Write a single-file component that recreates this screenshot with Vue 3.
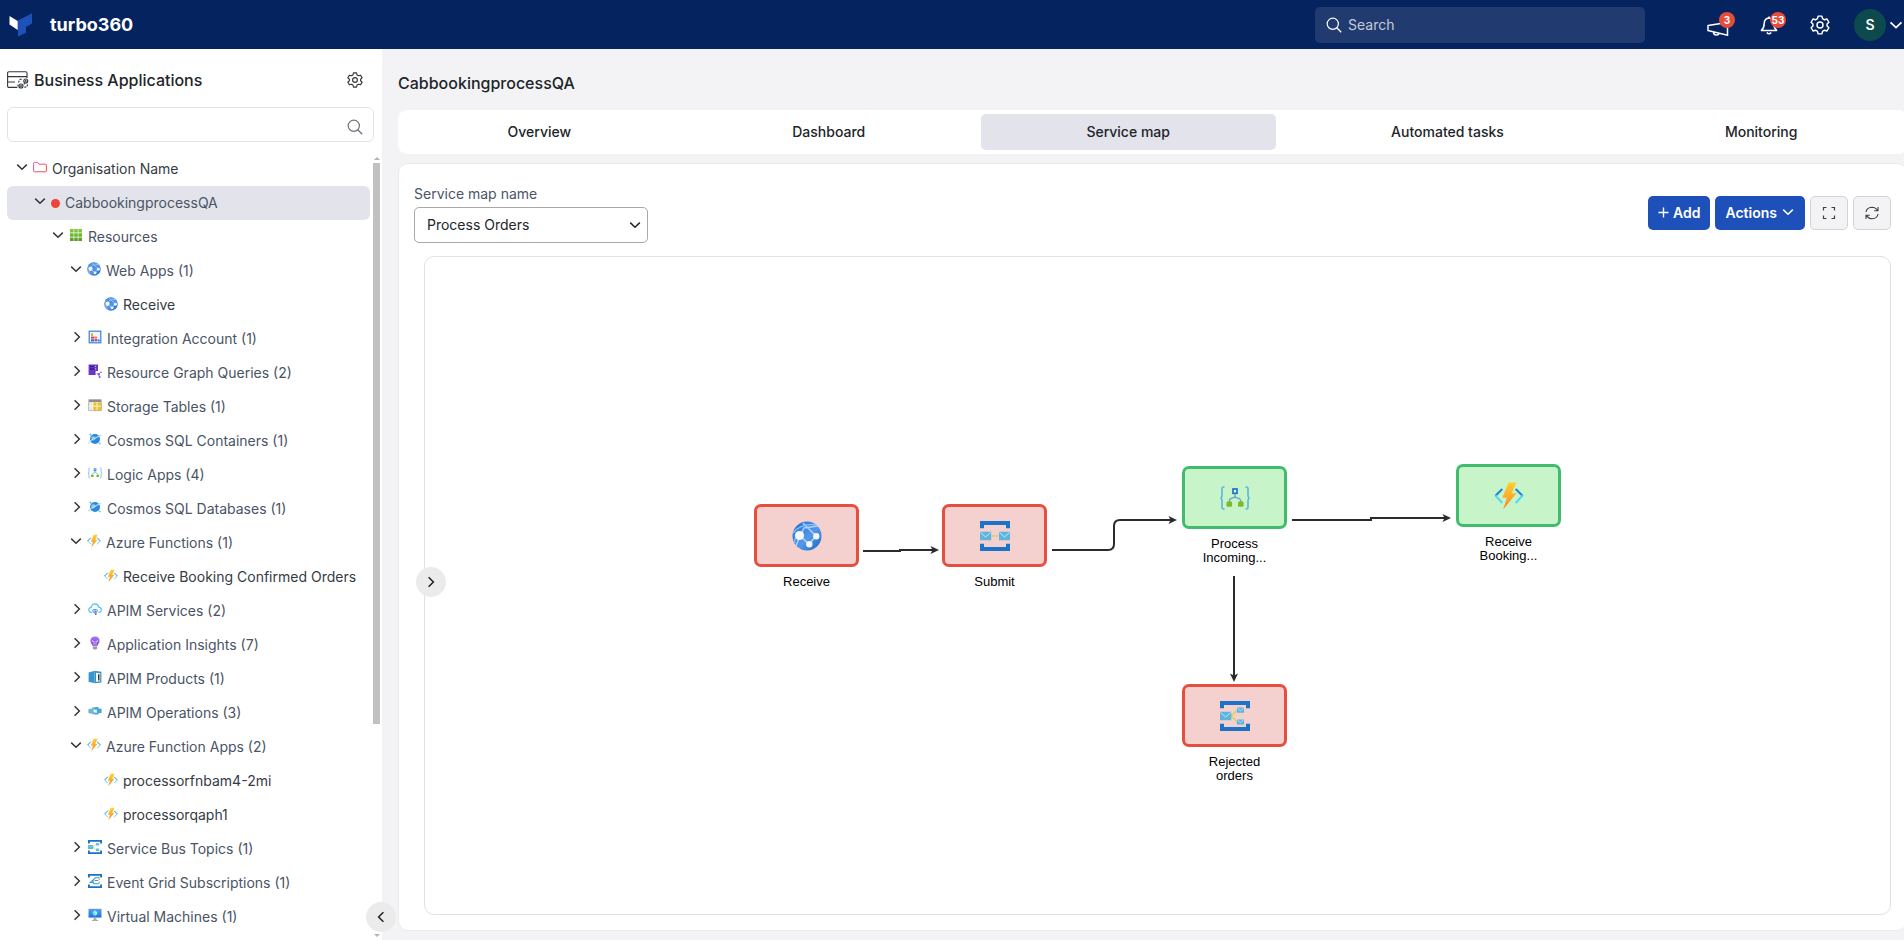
<script setup>
import { ref } from 'vue'

const tree = [
  { label: 'Organisation Name', icon: 'folder', level: 0, open: true, strong: true },
  { label: 'CabbookingprocessQA', dot: true, level: 1, open: true, selected: true },
  { label: 'Resources', icon: 'grid', level: 2, open: true },
  { label: 'Web Apps (1)', icon: 'globe', level: 3, open: true },
  { label: 'Receive', icon: 'globe', level: 4, leaf: true },
  { label: 'Integration Account (1)', icon: 'integration', level: 3 },
  { label: 'Resource Graph Queries (2)', icon: 'graph', level: 3 },
  { label: 'Storage Tables (1)', icon: 'table', level: 3 },
  { label: 'Cosmos SQL Containers (1)', icon: 'cosmos', level: 3 },
  { label: 'Logic Apps (4)', icon: 'logic', level: 3 },
  { label: 'Cosmos SQL Databases (1)', icon: 'cosmos', level: 3 },
  { label: 'Azure Functions (1)', icon: 'function', level: 3, open: true },
  { label: 'Receive Booking Confirmed Orders', icon: 'function', level: 4, leaf: true },
  { label: 'APIM Services (2)', icon: 'apim', level: 3 },
  { label: 'Application Insights (7)', icon: 'insights', level: 3 },
  { label: 'APIM Products (1)', icon: 'product', level: 3 },
  { label: 'APIM Operations (3)', icon: 'operation', level: 3 },
  { label: 'Azure Function Apps (2)', icon: 'function', level: 3, open: true },
  { label: 'processorfnbam4-2mi', icon: 'function', level: 4, leaf: true },
  { label: 'processorqaph1', icon: 'function', level: 4, leaf: true },
  { label: 'Service Bus Topics (1)', icon: 'topic', level: 3 },
  { label: 'Event Grid Subscriptions (1)', icon: 'event', level: 3 },
  { label: 'Virtual Machines (1)', icon: 'vm', level: 3 }
]

const tabs = ['Overview', 'Dashboard', 'Service map', 'Automated tasks', 'Monitoring']
const activeTab = ref('Service map')
const mapName = ref('Process Orders')
const filter = ref('')
const search = ref('')

const nodes = [
  { id: 1, lines: ['Receive'], icon: 'globe', status: 'error', x: 329, y: 247 },
  { id: 2, lines: ['Submit'], icon: 'queue', status: 'error', x: 517, y: 247 },
  { id: 3, lines: ['Process', 'Incoming...'], icon: 'logic', status: 'ok', x: 757, y: 209 },
  { id: 4, lines: ['Receive', 'Booking...'], icon: 'function', status: 'ok', x: 1031, y: 207 },
  { id: 5, lines: ['Rejected', 'orders'], icon: 'topic', status: 'error', x: 757, y: 427 }
]

const edges = [
  'M438 294H475V293H510',
  'M627 293H683Q689 293 689 287V269Q689 263 695 263H748',
  'M867 263H946V261H1022',
  'M809 319V421'
]
</script>

<template>
  <svg class="sprite" aria-hidden="true">
    <defs>
      <linearGradient id="g-globe" x1="0" y1="0" x2="1" y2="1">
        <stop offset="0" stop-color="#1b6fd0" /><stop offset="0.55" stop-color="#5596ea" /><stop offset="1" stop-color="#1267c4" />
      </linearGradient>
      <linearGradient id="g-bolt" x1="0" y1="0" x2="0" y2="1">
        <stop offset="0" stop-color="#fdd22c" /><stop offset="1" stop-color="#f8892d" />
      </linearGradient>
      <linearGradient id="g-grid" x1="0" y1="0" x2="0" y2="1">
        <stop offset="0" stop-color="#86cc3e" /><stop offset="1" stop-color="#5b9a24" />
      </linearGradient>
      <linearGradient id="g-vm" x1="0" y1="0" x2="0" y2="1">
        <stop offset="0" stop-color="#5ea0ef" /><stop offset="1" stop-color="#1475d8" />
      </linearGradient>
      <linearGradient id="g-bulb" x1="0" y1="0" x2="0" y2="1">
        <stop offset="0" stop-color="#a67af4" /><stop offset="1" stop-color="#773adc" />
      </linearGradient>
      <linearGradient id="g-folder" x1="0" y1="0" x2="1" y2="1">
        <stop offset="0" stop-color="#e85a9a" /><stop offset="1" stop-color="#ec5040" />
      </linearGradient>
    </defs>

    <symbol id="i-globe" viewBox="0 0 30 30">
      <circle cx="15" cy="15" r="14.5" fill="url(#g-globe)" />
      <path d="M8 15L12 7L26 5M11 2L24 15M8 15L17 23L24 15M8 15L4 25" fill="none" stroke="#a9d2f7" stroke-width="1.6" />
      <path d="M1 12Q9 2 24 4M3 22Q1 17 8 15" fill="none" stroke="#8dc2f2" stroke-width="1.3" />
      <circle cx="7.5" cy="14.5" r="4.6" fill="#f4f6fa" />
      <circle cx="24.3" cy="15.3" r="3.2" fill="#f4f6fa" />
      <circle cx="17.3" cy="23.3" r="3.2" fill="#f4f6fa" />
    </symbol>

    <symbol id="i-queue" viewBox="0 0 30 30">
      <path d="M0 0H30V7.3H26V4H4V7.3H0ZM0 30H30V22.7H26V26H4V22.7H0Z" fill="#1b72c6" />
      <path d="M0 10.8H11.2V19.2H0ZM19 10.8H30V19.2H19Z" fill="#5fb4dd" />
      <path d="M0.5 11.5L5.6 16L10.7 11.5M19.5 11.5L24.5 16L29.5 11.5" fill="none" stroke="#c7e6f4" stroke-width="1" />
      <path d="M12.3 15H14.6M15.6 15H17.9" stroke="#c4d63c" stroke-width="1.5" />
    </symbol>

    <symbol id="i-topic" viewBox="0 0 30 30">
      <path d="M0 0H30V7.3H26V4H4V7.3H0ZM0 30H30V22.7H26V26H4V22.7H0Z" fill="#1b72c6" />
      <path d="M11 15L17.5 9M11 15L17.5 21" stroke="#c4d63c" stroke-width="1.6" stroke-dasharray="2 0.6" />
      <path d="M0 10.8H11.2V19.2H0ZM17 6.6H24V11.7H17ZM17 18.4H24V23.5H17Z" fill="#5fb4dd" />
      <path d="M0.5 11.5L5.6 16L10.7 11.5M17.4 7L20.5 9.8L23.6 7M17.4 18.8L20.5 21.6L23.6 18.8" fill="none" stroke="#c7e6f4" stroke-width="0.9" />
    </symbol>

    <symbol id="i-event" viewBox="0 0 30 30">
      <path d="M0 0H30V7.3H26V4H4V7.3H0ZM0 30H30V22.7H26V26H4V22.7H0Z" fill="#1b72c6" />
      <path d="M25 8H16L5 18H12M22 14H14M24 21H14Q9 19 12 14" fill="none" stroke="#3d9bd8" stroke-width="2.4" />
      <circle cx="24" cy="11" r="2" fill="#b8d432" /><circle cx="24" cy="18" r="2" fill="#b8d432" />
    </symbol>

    <symbol id="i-logic" viewBox="0 0 30 30">
      <path d="M4.5 4H3.6Q2 4 2 6V12Q2 15 0.3 15Q2 15 2 18V24Q2 26 3.6 26H4.5M25.5 4H26.4Q28 4 28 6V12Q28 15 29.7 15Q28 15 28 18V24Q28 26 26.4 26H25.5" fill="none" stroke="#62b2de" stroke-width="1.6" />
      <path d="M15 10V13Q15 14.5 13 14.8Q9.3 15.5 9.3 18V20M15 13Q15 14.5 17 14.8Q20.8 15.5 20.8 18V20" fill="none" stroke="#5fa6cf" stroke-width="1.3" />
      <rect x="13" y="6" width="4" height="4.3" fill="#fff" stroke="#1b72c6" stroke-width="1.7" />
      <rect x="6.5" y="18.5" width="5.6" height="5.3" rx="1" fill="#7fba24" />
      <rect x="18" y="18.5" width="5.6" height="5.3" rx="1" fill="#7fba24" />
    </symbol>

    <symbol id="i-function" viewBox="0 0 30 30">
      <path d="M8.3 8L1.3 15M21.7 8L28.7 15" fill="none" stroke="#1f86db" stroke-width="2.1" />
      <path d="M1.3 14.4L8.3 22M28.7 14.4L21.7 22" fill="none" stroke="#50d9f8" stroke-width="2.1" />
      <path d="M14.5 1.5H22.5L17.7 12.2H22.6L9.2 28.5L12.8 16.8H8.3Z" fill="url(#g-bolt)" />
    </symbol>

    <symbol id="i-grid" viewBox="0 0 14 14">
      <path d="M1 1H4.6V4.6H1ZM5.2 1H8.8V4.6H5.2ZM9.4 1H13V4.6H9.4ZM1 5.2H4.6V8.8H1ZM5.2 5.2H8.8V8.8H5.2ZM9.4 5.2H13V8.8H9.4ZM1 9.4H4.6V13H1ZM5.2 9.4H8.8V13H5.2ZM9.4 9.4H13V13H9.4Z" fill="url(#g-grid)" />
    </symbol>

    <symbol id="i-folder" viewBox="0 0 14 14">
      <path d="M0.6 11V3.2Q0.6 2.4 1.4 2.4H4.6L6 4.2H12.6Q13.4 4.2 13.4 5V11Q13.4 11.8 12.6 11.8H1.4Q0.6 11.8 0.6 11Z" fill="none" stroke="url(#g-folder)" stroke-width="1" />
    </symbol>

    <symbol id="i-integration" viewBox="0 0 14 14">
      <rect x="1.2" y="1.2" width="11.6" height="11.6" fill="#eef5fc" stroke="#3384d8" stroke-width="1.2" />
      <path d="M3 3.2H5V6H3Z" fill="#f0a51e" /><path d="M3 6.6H6.5V8.6H3Z" fill="#e63d3d" />
      <path d="M3 9.2H6V11.4H3ZM9.8 9.4H11.6V11.4H9.8Z" fill="#2f6fd0" /><path d="M6.6 9H9.2V11.4H6.6Z" fill="#c33fa0" /><path d="M7 6.8H9V8.4H7Z" fill="#f06a4a" />
    </symbol>

    <symbol id="i-graph" viewBox="0 0 14 14">
      <path d="M0.6 0.6H10V7H7.6V11H0.6Z" fill="#6b35c9" />
      <path d="M2 2.4H8M2 5H8" stroke="#3d1c8a" stroke-width="1.4" /><circle cx="7.4" cy="2.4" r="0.7" fill="#d9c6fb" /><circle cx="7.4" cy="5" r="0.7" fill="#d9c6fb" />
      <path d="M10.8 10.2L8.4 9.6M10.8 10.2L13 8M10.8 10.2L11.6 13" stroke="#a67af4" stroke-width="0.8" />
      <circle cx="10.8" cy="10.2" r="1.2" fill="#8a55e6" /><circle cx="13" cy="8.2" r="0.8" fill="#8a55e6" /><circle cx="11.6" cy="13" r="1" fill="#8a55e6" />
    </symbol>

    <symbol id="i-table" viewBox="0 0 14 14">
      <path d="M0.6 1.4H13.4V12.6H0.6Z" fill="#f2e7b2" /><path d="M0.6 1.4H13.4V4H0.6Z" fill="#8d8d8d" />
      <path d="M5 4.4H13.4V12.4H5Z" fill="#edc22e" /><path d="M0.6 4.4H4.6V12.4H0.6Z" fill="#e8e8e8" />
      <path d="M0.6 8.2H13.4M4.8 4V12.6M9 4V12.6" stroke="#fff" stroke-width="0.8" /><path d="M0.6 4V12.6H13.4V4" fill="none" stroke="#9c9c8c" stroke-width="0.6" />
    </symbol>

    <symbol id="i-cosmos" viewBox="0 0 14 14">
      <circle cx="7" cy="7" r="5" fill="#3385dc" /><path d="M3.2 5Q7 3 8 6.5Q6 9 4 8.5Z" fill="#8cc9f5" />
      <path d="M1 11.6Q0.2 9.2 7 6.2Q12.8 3.2 13.2 3" fill="none" stroke="#9fe6fb" stroke-width="1.2" />
      <path d="M2.4 0.8L3 2.2L4.4 2.6L3 3.1L2.4 4.4L1.9 3.1L0.5 2.6L1.9 2.2ZM11.8 10L12.2 11.1L13.3 11.5L12.2 11.9L11.8 13L11.4 11.9L10.3 11.5L11.4 11.1Z" fill="#50d0f4" />
    </symbol>

    <symbol id="i-apim" viewBox="0 0 14 14">
      <path d="M4.2 10.4H3.4Q0.8 10.2 0.8 7.8Q0.9 5.6 3.2 5.3Q4 2 7.2 1.9Q10.2 2.1 10.8 5.2Q13.3 5.6 13.3 7.9Q13.2 10.3 10.4 10.4" fill="none" stroke="#4cc8ea" stroke-width="1.2" />
      <path d="M4.5 8.2Q7 6.4 9.5 8.2L8.4 10.6Q7 11.6 5.6 10.6Z" fill="none" stroke="#3aa3df" stroke-width="1" />
      <circle cx="7.2" cy="9.4" r="1.1" fill="#9a6cf0" /><circle cx="7.8" cy="12" r="0.9" fill="#7448cc" />
    </symbol>

    <symbol id="i-insights" viewBox="0 0 14 14">
      <path d="M7 0.4Q11.6 0.6 11.6 5Q11.4 7.2 9.4 9.4V10.2H4.6V9.4Q2.6 7.2 2.4 5Q2.4 0.6 7 0.4Z" fill="url(#g-bulb)" />
      <path d="M5 4.2Q4 4.4 4.2 5.2Q5 6 6 5.2V9.8M9 4.2Q10 4.4 9.8 5.2Q9 6 8 5.2V9.8" fill="none" stroke="#e4d7fd" stroke-width="0.8" />
      <path d="M4.8 10.8H9.2V12.4L8 13.6H6L4.8 12.4Z" fill="#9a9aa4" />
    </symbol>

    <symbol id="i-product" viewBox="0 0 14 14">
      <path d="M0.6 2.4L6.6 0.8V13.2L0.6 11.8Z" fill="#3797cc" /><path d="M6.6 0.8L13.4 1.8V12.4L6.6 13.2Z" fill="#3e8fc0" />
      <path d="M8 2.8L12.2 3.2V11.2L8 11.8Z" fill="#f7fafc" /><path d="M10.8 4.2V10.6M10 6.2H11.4" stroke="#1d2b36" stroke-width="1.3" />
    </symbol>

    <symbol id="i-operation" viewBox="0 0 14 14">
      <path d="M0.4 5.6Q0.4 4.8 1.4 4.8H4V3.4H7.4V5.4H5.6V8.2H7.4V10.2H4V9.4H1.4Q0.4 9.4 0.4 8.6Z" fill="#69b8da" />
      <path d="M13.6 8.4Q13.6 9.2 12.6 9.2H10.4V10.6H6.8V8.8H8.8V5.8H6.6V3H10.4V4.6H12.6Q13.6 4.6 13.6 5.4Z" fill="#4ba6cd" />
    </symbol>

    <symbol id="i-vm" viewBox="0 0 14 14">
      <path d="M0.5 0.8H13.5V9.6H0.5Z" fill="url(#g-vm)" /><path d="M7 2.6L9.2 3.9V6.4L7 7.7L4.8 6.4V3.9Z" fill="#a6ecfb" /><path d="M7 5.1V7.7L4.8 6.4V3.9Z" fill="#63d0f2" />
      <path d="M5.8 9.6H8.2L8.6 12H10V13H4V12H5.4Z" fill="#a9a9ae" />
    </symbol>

    <symbol id="i-gear" viewBox="0 0 18 18">
      <path d="M7.3 1H10.7L11.3 3.3L13 4.3L15.3 3.6L17 6.6L15.3 8.2V9.8L17 11.4L15.3 14.4L13 13.7L11.3 14.7L10.7 17H7.3L6.7 14.7L5 13.7L2.7 14.4L1 11.4L2.7 9.8V8.2L1 6.6L2.7 3.6L5 4.3L6.7 3.3Z" fill="none" stroke="currentColor" stroke-width="1.3" stroke-linejoin="round" />
      <circle cx="9" cy="9" r="2.7" fill="none" stroke="currentColor" stroke-width="1.3" />
    </symbol>

    <symbol id="i-search" viewBox="0 0 16 16">
      <circle cx="6.8" cy="6.8" r="5.6" fill="none" stroke="currentColor" stroke-width="1.2" />
      <path d="M10.8 10.8L15.2 15.2" stroke="currentColor" stroke-width="1.3" />
    </symbol>

    <symbol id="i-down" viewBox="0 0 14 14">
      <path d="M2.2 4.6L7 9.2L11.8 4.6" fill="none" stroke="currentColor" stroke-width="1.5" />
    </symbol>
    <symbol id="i-right" viewBox="0 0 14 14">
      <path d="M4.6 2.2L9.4 7L4.6 11.8" fill="none" stroke="currentColor" stroke-width="1.5" />
    </symbol>
  </svg>

  <div class="page">
    <header class="topbar">
      <a class="brand" href="#">
        <svg class="logo" viewBox="0 0 24 24" aria-hidden="true">
          <path d="M0.5 3L8.7 8V17L0.5 11.5Z" fill="#fff" />
          <path d="M9 7.6L23 0.2V10.4L17 14V19.8L9 23.6Z" fill="#1f52b8" />
        </svg>
        <span>turbo360</span>
      </a>
      <label class="global-search">
        <svg class="i16" aria-hidden="true"><use href="#i-search" /></svg>
        <input v-model="search" type="search" placeholder="Search" aria-label="Search" />
      </label>
      <nav class="top-actions" aria-label="Account">
        <button class="top-btn horn" type="button" aria-label="Announcements">
          <svg viewBox="0 0 22 14" aria-hidden="true"><path d="M1 3V9.2M1 3.6L20.5 0.4V13.2L1 8.6M6.5 10.2Q6.6 13 9.4 13Q11.6 13 12.2 11.4" fill="none" stroke="#fff" stroke-width="1.5" /></svg>
          <span class="badge">3</span>
        </button>
        <button class="top-btn bell" type="button" aria-label="Notifications">
          <svg viewBox="0 0 18 20" aria-hidden="true"><path d="M9 1.4V3Q4.4 3.4 4.2 8.4Q4.2 12.6 1.4 15.4H16.6Q13.8 12.6 13.8 8.4Q13.6 3.4 9 3M6.8 17.4Q9 20 11.2 17.4" fill="none" stroke="#fff" stroke-width="1.5" stroke-linejoin="round" /></svg>
          <span class="badge">53</span>
        </button>
        <button class="top-btn" type="button" aria-label="Settings">
          <svg class="i20" aria-hidden="true"><use href="#i-gear" /></svg>
        </button>
        <button class="account" type="button" aria-label="Account menu">
          <span class="avatar">S</span>
          <svg class="i16" aria-hidden="true"><use href="#i-down" /></svg>
        </button>
      </nav>
    </header>

    <div class="body">
      <aside class="sidebar">
        <div class="side-head">
          <svg class="app-icon" viewBox="0 0 22 18" fill="none" stroke="#33373c" stroke-width="1.1" aria-hidden="true">
            <path d="M10 16.4H2Q0.6 16.4 0.6 15V2Q0.6 0.8 2 0.8H18.6Q20 0.8 20 2V7M0.6 5.6H20M0.6 11H8" />
            <circle cx="14" cy="15" r="2" /><circle cx="18.8" cy="10" r="2" /><circle cx="14" cy="15" r="0.4" /><circle cx="18.8" cy="10" r="0.4" />
            <path d="M11.4 11.4L13 8.4L15.8 8.2M17.4 16.4L20 15.6L20.6 13.2M11 13.4V17M16.6 13.2L18 12.6" stroke-dasharray="2 1" />
          </svg>
          <h2>Business Applications</h2>
          <button type="button" aria-label="Application settings"><svg class="i16" aria-hidden="true"><use href="#i-gear" /></svg></button>
        </div>
        <label class="side-search">
          <input v-model="filter" type="text" aria-label="Filter applications" />
          <svg class="i16" aria-hidden="true"><use href="#i-search" /></svg>
        </label>
        <div class="tree-wrap">
          <ul class="tree">
            <li
              v-for="item in tree"
              :key="item.label"
              class="row"
              :class="['level-' + item.level, { selected: item.selected, leaf: item.leaf, strong: item.strong, closed: !item.open && !item.leaf }]"
            >
              <button v-if="!item.leaf" class="toggle" type="button" :aria-label="'Toggle ' + item.label" :aria-expanded="!!item.open">
                <svg class="i14" aria-hidden="true"><use :href="item.open ? '#i-down' : '#i-right'" /></svg>
              </button>
              <span v-if="item.dot" class="dot"></span>
              <svg v-else class="i14 kind" aria-hidden="true"><use :href="'#i-' + item.icon" /></svg>
              <a href="#">{{ item.label }}</a>
            </li>
          </ul>
          <div class="scroll" aria-hidden="true">
            <i class="up"></i>
            <div class="track"><div class="thumb"></div></div>
            <i class="down"></i>
          </div>
        </div>
        <button class="round collapse" type="button" aria-label="Collapse sidebar">
          <svg class="i14 flip" aria-hidden="true"><use href="#i-right" /></svg>
        </button>
      </aside>

      <main class="main">
        <h1>CabbookingprocessQA</h1>
        <nav class="tabs" aria-label="Sections">
          <button v-for="tab in tabs" :key="tab" type="button" :class="{ active: tab === activeTab }" @click="activeTab = tab">{{ tab }}</button>
        </nav>
        <section class="card">
          <div class="toolbar">
            <div class="field">
              <label for="map-name">Service map name</label>
              <div class="select">
                <select id="map-name" v-model="mapName"><option>Process Orders</option></select>
                <svg class="i14" aria-hidden="true"><use href="#i-down" /></svg>
              </div>
            </div>
            <div class="buttons">
              <button class="primary" type="button">
                <svg class="plus" viewBox="0 0 12 12" aria-hidden="true"><path d="M6 0.5V11.5M0.5 6H11.5" stroke="#fff" stroke-width="1.5" /></svg>Add
              </button>
              <button class="primary actions" type="button">Actions<svg class="i14" aria-hidden="true"><use href="#i-down" /></svg></button>
              <button class="ghost" type="button" aria-label="Full screen">
                <svg class="i14" viewBox="0 0 14 14" aria-hidden="true"><path d="M1.5 4.5V1.5H4.5M9.5 1.5H12.5V4.5M12.5 9.5V12.5H9.5M4.5 12.5H1.5V9.5" fill="none" stroke="#3c4046" stroke-width="1.2" /></svg>
              </button>
              <button class="ghost" type="button" aria-label="Refresh">
                <svg class="i14" viewBox="0 0 14 14" aria-hidden="true"><path d="M1 6Q1.6 1.4 7 1.2Q10.6 1.2 12.6 4.6M13 1V4.8H9.2M13 8Q12.4 12.6 7 12.8Q3.4 12.8 1.4 9.4M1 13V9.2H4.8" fill="none" stroke="#3c4046" stroke-width="1.1" /></svg>
              </button>
            </div>
          </div>

          <div class="canvas">
            <svg class="edges" aria-hidden="true">
              <defs>
                <marker id="arrow" markerUnits="userSpaceOnUse" markerWidth="10" markerHeight="10" refX="5" refY="5" orient="auto">
                  <path d="M0.5 1L9 5L0.5 9L2.5 5Z" fill="#2b2b2b" />
                </marker>
              </defs>
              <path v-for="d in edges" :key="d" :d="d" marker-end="url(#arrow)" />
            </svg>
            <div v-for="n in nodes" :key="n.id" class="node" :style="{ left: n.x + 'px', top: n.y + 'px' }">
              <div class="box" :class="n.status"><svg aria-hidden="true"><use :href="'#i-' + n.icon" /></svg></div>
              <span v-for="line in n.lines" :key="line">{{ line }}</span>
            </div>
            <button class="round expand" type="button" aria-label="Expand panel">
              <svg class="i14" aria-hidden="true"><use href="#i-right" /></svg>
            </button>
          </div>
        </section>
      </main>
    </div>
  </div>
</template>

<style>
body {
  margin: 0;
  background: #f3f3f6;
}
</style>

<style scoped>
* {
  box-sizing: border-box;
}
button,
input,
select {
  font: inherit;
  color: inherit;
  border: 0;
  background: none;
  padding: 0;
  margin: 0;
}
a {
  color: inherit;
  text-decoration: none;
}
svg {
  display: block;
  flex: none;
}
.sprite {
  position: absolute;
  width: 0;
  height: 0;
}
.i14 {
  width: 14px;
  height: 14px;
}
.i16 {
  width: 16px;
  height: 16px;
}
.i20 {
  width: 20px;
  height: 20px;
}
.page {
  min-height: 100vh;
  display: flex;
  flex-direction: column;
  overflow: hidden;
  font-family: Inter, "Liberation Sans", sans-serif;
  font-size: 14px;
  color: #212529;
}

.topbar {
  height: 49px;
  display: flex;
  align-items: center;
  background: #05245f;
  color: #fff;
}
.brand {
  display: flex;
  align-items: center;
  gap: 17px;
  padding-left: 9px;
  font-size: 18px;
  font-weight: 700;
}
.logo {
  width: 24px;
  height: 24px;
}
.global-search {
  margin-left: auto;
  width: 330px;
  height: 36px;
  display: flex;
  align-items: center;
  gap: 6px;
  padding: 0 11px;
  border-radius: 5px;
  background: #213b70;
}
.global-search input {
  flex: 1;
  min-width: 0;
}
.global-search input::placeholder {
  color: #c3cad8;
  opacity: 1;
}
.top-actions {
  display: flex;
  align-items: center;
  gap: 31px;
  margin-left: 63px;
}
.top-btn {
  position: relative;
  width: 20px;
  height: 20px;
  display: flex;
  align-items: center;
  justify-content: center;
}
.horn svg {
  width: 22px;
  height: 14px;
  margin-top: 8px;
}
.bell svg {
  width: 18px;
  height: 20px;
}
.badge {
  position: absolute;
  left: 11px;
  top: -3px;
  min-width: 16px;
  height: 16px;
  border-radius: 8px;
  background: #e64c3c;
  font-size: 10px;
  font-weight: 700;
  line-height: 16px;
  text-align: center;
}
.account {
  display: flex;
  align-items: center;
  gap: 2px;
  margin-left: -7px;
}
.avatar {
  width: 32px;
  height: 32px;
  border-radius: 50%;
  background: #0d4a4e;
  font-weight: 600;
  line-height: 32px;
}

.body {
  flex: 1;
  display: flex;
}
.sidebar {
  position: relative;
  width: 382px;
  flex: none;
  display: flex;
  flex-direction: column;
  padding: 13px 0 0 7px;
  background: #fff;
}
.side-head {
  height: 36px;
  display: flex;
  align-items: center;
  gap: 5px;
  padding-right: 19px;
}
.app-icon {
  width: 22px;
  height: 18px;
}
h2 {
  flex: 1;
  margin: 0;
  font-size: 16px;
  font-weight: 500;
}
.side-head button {
  color: #33373c;
}
.side-search {
  height: 35px;
  display: flex;
  align-items: center;
  margin: 9px 8px 10px 0;
  padding: 4px 10px 0;
  border: 1px solid #e3e3e6;
  border-radius: 6px;
  color: #6c737c;
}
.side-search input {
  flex: 1;
  min-width: 0;
}
.tree-wrap {
  flex: 1;
  display: flex;
  gap: 3px;
}
.tree {
  flex: 1;
  margin: 0;
  padding: 0;
  list-style: none;
}
.row {
  height: 34px;
  display: flex;
  align-items: center;
  padding-bottom: 2px;
  border-radius: 6px;
  color: #4a5465;
}
.strong,
.leaf {
  color: #363b43;
}
.selected {
  background: #e3e3eb;
}
.level-0 {
  padding-left: 8px;
}
.level-1 {
  padding-left: 26px;
}
.level-2 {
  padding-left: 44px;
}
.level-3 {
  padding-left: 62px;
}
.level-3.closed {
  padding-left: 63px;
}
.level-4 {
  padding-left: 97px;
}
.toggle {
  margin-right: 4px;
  margin-bottom: 2px;
  color: #33373c;
}
.kind {
  margin-right: 5px;
  margin-bottom: 2px;
}
.leaf .kind {
  margin-bottom: 0;
}
.dot {
  width: 9px;
  height: 9px;
  margin-right: 5px;
  margin-top: 2px;
  border-radius: 50%;
  background: #ee4438;
}
.scroll {
  width: 7px;
  margin-right: 2px;
  padding: 5px 0 3px;
  display: flex;
  flex-direction: column;
  align-items: center;
  gap: 3px;
}
.up,
.down {
  width: 0;
  height: 0;
  border: 3px solid transparent;
}
.up {
  border-top: 0;
  border-bottom-color: #b4b4b4;
}
.down {
  border-bottom: 0;
  border-top-color: #b4b4b4;
}
.track {
  flex: 1;
  width: 100%;
}
.thumb {
  height: 73%;
  background: #c1c1c1;
}
.round {
  position: absolute;
  width: 30px;
  height: 30px;
  border-radius: 50%;
  display: flex;
  align-items: center;
  justify-content: center;
  background: #ebebeb;
  color: #1d1f23;
}
.collapse {
  right: -14px;
  bottom: 8px;
}
.flip {
  transform: scaleX(-1);
}
.expand {
  left: -9px;
  top: 310px;
}

.main {
  flex: 1;
  min-width: 0;
  display: flex;
  flex-direction: column;
  padding: 22px 0 9px 16px;
  margin-right: -3px;
}
h1 {
  margin: 0 0 15px;
  font-size: 16px;
  font-weight: 500;
  line-height: 24px;
}
.tabs {
  display: flex;
  gap: 10px;
  padding: 4px;
  border-radius: 9px;
  background: #fff;
  font-weight: 500;
}
.tabs button {
  flex: 1 1 auto;
  height: 36px;
  padding-bottom: 2px;
  border-radius: 5px;
}
.tabs .active {
  background: #e3e3eb;
}
.card {
  flex: 1;
  display: flex;
  flex-direction: column;
  margin-top: 9px;
  padding: 20px 15px 15px;
  border: 1px solid #ebebee;
  border-radius: 10px;
  background: #fff;
}
.toolbar {
  display: flex;
  justify-content: space-between;
  margin-bottom: 13px;
}
.field label {
  display: block;
  line-height: 20px;
  margin-bottom: 3px;
  color: #4a5568;
}
.select {
  display: flex;
  align-items: center;
  position: relative;
}
.select select {
  width: 234px;
  height: 36px;
  padding: 0 12px 2px;
  appearance: none;
  border: 1px solid #a9a9ad;
  border-radius: 5px;
  background: #fff;
}
.select svg {
  position: absolute;
  right: 6px;
  pointer-events: none;
}
.buttons {
  display: flex;
  gap: 5px;
  margin-top: 12px;
}
.buttons button {
  height: 34px;
  display: flex;
  align-items: center;
  justify-content: center;
  border-radius: 5px;
}
.buttons .primary {
  gap: 4px;
  padding: 0 10px 2px;
  background: #1d50b8;
  color: #fff;
  font-weight: 600;
}
.plus {
  width: 11px;
  height: 11px;
}
.buttons .ghost {
  width: 38px;
  border: 1px solid #d3d3d7;
  background: #f3f3f6;
}

.canvas {
  flex: 1;
  position: relative;
  min-height: 620px;
  margin-left: 10px;
  border: 1px solid #e2e2e6;
  border-radius: 10px;
}
.edges {
  position: absolute;
  inset: 0;
  width: 100%;
  height: 100%;
  fill: none;
  stroke: #2b2b2b;
  stroke-width: 2;
}
.edges marker {
  stroke: none;
}
.node {
  position: absolute;
  width: 105px;
  display: flex;
  flex-direction: column;
  align-items: center;
  font: 13px/14px "Liberation Sans", Arial, sans-serif;
  color: #000;
}
.box {
  width: 105px;
  height: 63px;
  display: flex;
  align-items: center;
  justify-content: center;
  margin-bottom: 8px;
  border: 3px solid #e64f3f;
  border-radius: 7px;
  background: #f4d0ce;
}
.box svg {
  width: 30px;
  height: 30px;
}
.box.ok {
  border-color: #41bc6f;
  background: #c8f4ca;
}
</style>
